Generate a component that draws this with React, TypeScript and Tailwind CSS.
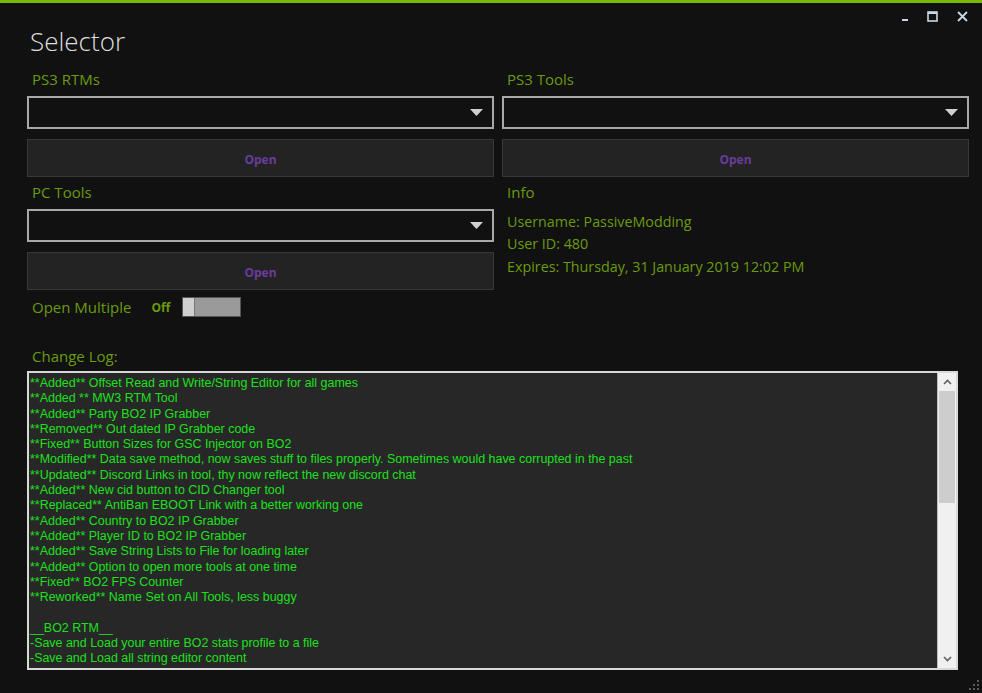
import React from "react";

const logLines = [
  "**Added** Offset Read and Write/String Editor for all games",
  "**Added ** MW3 RTM Tool",
  "**Added** Party BO2 IP Grabber",
  "**Removed** Out dated IP Grabber code",
  "**Fixed** Button Sizes for GSC Injector on BO2",
  "**Modified** Data save method, now saves stuff to files properly. Sometimes would have corrupted in the past",
  "**Updated** Discord Links in tool, thy now reflect the new discord chat",
  "**Added** New cid button to CID Changer tool",
  "**Replaced** AntiBan EBOOT Link with a better working one",
  "**Added** Country to BO2 IP Grabber",
  "**Added** Player ID to BO2 IP Grabber",
  "**Added** Save String Lists to File for loading later",
  "**Added** Option to open more tools at one time",
  "**Fixed** BO2 FPS Counter",
  "**Reworked** Name Set on All Tools, less buggy",
  "",
  "__BO2 RTM__",
  "-Save and Load your entire BO2 stats profile to a file",
  "-Save and Load all string editor content",
];

const uiFont = { fontFamily: '"Open Sans", "Noto Sans", sans-serif' };

function Label({ children }: { children: React.ReactNode }) {
  return (
    <div className="h-[30px] leading-[30px] pl-[5px] text-[15px] text-[#6b9a10]" style={uiFont}>
      {children}
    </div>
  );
}

function Combo() {
  return (
    <div className="mt-[2px] h-[33px] border-2 border-[#a8a8a8] bg-[#111111] flex items-center justify-end pr-[9px]">
      <svg width="13" height="7" viewBox="0 0 13 7">
        <polygon points="0,0 13,0 6.5,7" fill="#d0d0d0" />
      </svg>
    </div>
  );
}

function OpenButton() {
  return (
    <div
      className="mt-[10px] h-[38px] pt-[4px] bg-[#232323] border border-[#383838] flex items-center justify-center text-[12px] font-bold text-[#6a3c9e]"
      style={uiFont}
    >
      Open
    </div>
  );
}

export default function App() {
  return (
    <div className="w-[982px] h-[693px] bg-[#111111] flex flex-col relative overflow-hidden">
      <div className="h-[3px] bg-[#7cb800]" />
      <div className="h-[26px] flex items-center justify-end pr-[14px] gap-[19px]">
        <svg width="8" height="14" viewBox="0 0 8 14">
          <rect x="2" y="10" width="6" height="2" fill="#c9d6e6" />
        </svg>
        <svg width="11" height="11" viewBox="0 0 11 11">
          <rect x="1" y="1" width="9" height="9" fill="none" stroke="#c9d6e6" strokeWidth="1.6" />
          <rect x="1" y="1" width="9" height="2" fill="#c9d6e6" />
        </svg>
        <svg width="11" height="11" viewBox="0 0 11 11">
          <path d="M1 1 L10 10 M10 1 L1 10" stroke="#c9d6e6" strokeWidth="1.8" />
        </svg>
      </div>
      <div
        className="h-[35px] leading-[24px] pl-[30px] text-[26px] font-light text-[#dedede]"
        style={uiFont}
      >
        Selector
      </div>
      <div className="grid grid-cols-2 gap-x-[8px] pl-[27px] pr-[13px]">
        <div className="flex flex-col">
          <Label>PS3 RTMs</Label>
          <Combo />
          <OpenButton />
          <Label>PC Tools</Label>
          <Combo />
          <OpenButton />
          <div className="mt-[1px] h-[32px] flex items-center pl-[5px]">
            <span className="text-[15px] text-[#6b9a10]" style={uiFont}>
              Open Multiple
            </span>
            <span className="ml-[20px] pt-[2px] text-[12px] font-bold text-[#6b9a10]" style={uiFont}>
              Off
            </span>
            <div className="ml-[12px] w-[59px] h-[20px] flex bg-[#9a9a9a] border border-[#555555]">
              <div className="w-[12px] h-full bg-[#cfcfcf] border-r border-[#777777]" />
            </div>
          </div>
        </div>
        <div className="flex flex-col">
          <Label>PS3 Tools</Label>
          <Combo />
          <OpenButton />
          <Label>Info</Label>
          <div className="mt-[3.5px] pl-[5px] text-[14.3px] leading-[22.5px] text-[#6b9a10]" style={uiFont}>
            <div>Username: PassiveModding</div>
            <div>User ID: 480</div>
            <div>Expires: Thursday, 31 January 2019 12:02 PM</div>
          </div>
        </div>
      </div>
      <div className="mt-[18px] pl-[32px] h-[30px] leading-[30px] text-[15px] text-[#6b9a10]" style={uiFont}>
        Change Log:
      </div>
      <div className="ml-[27px] w-[931px] h-[299px] border-2 border-[#d8d8d8] bg-[#272727] flex">
        <div
          className="flex-1 pl-[1px] pt-[3px] text-[12.45px] leading-[15.3px] text-[#1de01d] overflow-hidden whitespace-pre"
          style={{ fontFamily: '"Liberation Sans", Arial, sans-serif' }}
        >
          {logLines.map((l, i) => (
            <div key={i} className="h-[15.3px]">
              {l}
            </div>
          ))}
        </div>
        <div className="w-[19px] h-full bg-[#f0f0f0] border-l border-[#bdbdbd] flex flex-col items-center">
          <div className="h-[18px] flex items-center justify-center">
            <svg width="9" height="6" viewBox="0 0 9 6">
              <path d="M1 5 L4.5 1.5 L8 5" fill="none" stroke="#606060" strokeWidth="1.6" />
            </svg>
          </div>
          <div className="w-[16px] h-[112px] bg-[#cdcdcd]" />
          <div className="flex-1" />
          <div className="h-[18px] flex items-center justify-center">
            <svg width="9" height="6" viewBox="0 0 9 6">
              <path d="M1 1 L4.5 4.5 L8 1" fill="none" stroke="#606060" strokeWidth="1.6" />
            </svg>
          </div>
        </div>
      </div>
      <svg className="absolute right-[2px] bottom-[2px]" width="12" height="12" viewBox="0 0 12 12">
        <rect x="9" y="1" width="2" height="2" fill="#5a5a5a" />
        <rect x="5" y="5" width="2" height="2" fill="#5a5a5a" />
        <rect x="9" y="5" width="2" height="2" fill="#5a5a5a" />
        <rect x="1" y="9" width="2" height="2" fill="#5a5a5a" />
        <rect x="5" y="9" width="2" height="2" fill="#5a5a5a" />
        <rect x="9" y="9" width="2" height="2" fill="#5a5a5a" />
      </svg>
    </div>
  );
}
